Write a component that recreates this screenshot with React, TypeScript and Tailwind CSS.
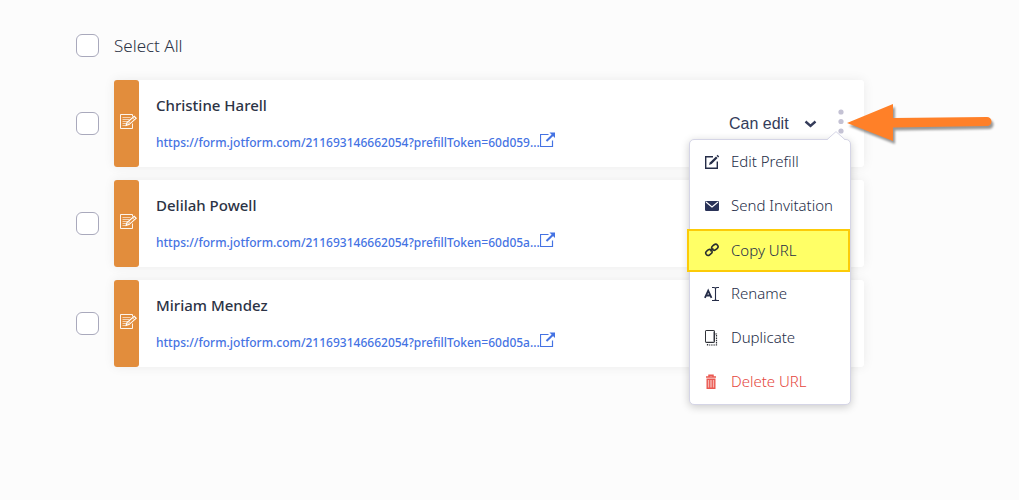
import type { ReactNode } from "react";
import clsx from "clsx";

const prefills = [
  { id: 1, name: "Christine Harell", url: "https://form.jotform.com/211693146662054?prefillToken=60d059...", menuOpen: true },
  { id: 2, name: "Delilah Powell", url: "https://form.jotform.com/211693146662054?prefillToken=60d05a...", menuOpen: false },
  { id: 3, name: "Miriam Mendez", url: "https://form.jotform.com/211693146662054?prefillToken=60d05a...", menuOpen: false },
];

function FormIcon() {
  return (
    <svg width="17" height="17" viewBox="0 0 17 17" fill="none" stroke="#fff" aria-hidden="true">
      <path d="M12.5 3.5V1.5h-12v14h12v-5" strokeOpacity="0.9" />
      <path d="M2.5 4.5h8M2.5 6.5h7M2.5 8.5h6M2.5 10.5h4M2.5 12.5h3" strokeOpacity="0.6" />
      <path d="M6 12.5l1-3 7.2-6.2 2 2L9 11.6z" fill="#e28d3c" strokeWidth="1.1" />
      <path d="M12.5 4.8l2 2M6 12.5l4-3.8" strokeWidth="0.8" />
    </svg>
  );
}

function OpenIcon() {
  return (
    <svg width="16" height="16" viewBox="0 0 16 16" fill="none" stroke="#4573e3" aria-hidden="true">
      <path d="M8.5 2.5h-8v12h12v-6" strokeWidth="1.2" />
      <path d="M6.5 9L13 2.8" strokeWidth="2" />
      <path d="M9.5.5H15V6z" fill="#4573e3" stroke="none" />
    </svg>
  );
}

function EditIcon() {
  return (
    <svg width="16" height="16" viewBox="0 0 16 16" fill="none" stroke="#252d48" aria-hidden="true">
      <path d="M9 2.7H1.7v11.6h11.6V7.5" strokeWidth="1.4" />
      <path d="M5 11l.8-2.6 6.2-6 1.6 1.6-6 6z" fill="#252d48" stroke="none" />
      <path d="M12.6 1.8l1-1 1.6 1.6-1 1z" fill="#252d48" stroke="none" />
    </svg>
  );
}

function MailIcon() {
  return (
    <svg width="16" height="16" viewBox="0 0 16 16" aria-hidden="true">
      <rect x="1" y="3" width="14" height="10" rx="1.2" fill="#2a3358" />
      <path d="M2 4l6 5 6-5" fill="none" stroke="#fff" strokeWidth="1.1" />
    </svg>
  );
}

function LinkIcon() {
  return (
    <svg width="16" height="16" viewBox="0 0 16 16" fill="none" stroke="#2a3030" strokeWidth="1.6" aria-hidden="true">
      <rect x="7.6" y="2.8" width="6.6" height="4.8" rx="2.4" transform="rotate(-38 10.9 5.2)" />
      <rect x="1.6" y="8" width="6.6" height="4.8" rx="2.4" transform="rotate(-38 4.9 10.4)" />
      <path d="M6.2 9.3l3.2-2.7" strokeWidth="1.3" />
    </svg>
  );
}

function RenameIcon() {
  return (
    <svg width="16" height="16" viewBox="0 0 16 16" fill="none" stroke="#252d48" aria-hidden="true">
      <path d="M.9 11.8L4.2 4.6 7.5 11.8M2.4 9.5h3.8" strokeWidth="1.8" />
      <path d="M8 1.5h2q1.5 0 1.5 1.2Q11.5 1.5 13 1.5h2M11.5 2.5v11M8 14.5h2q1.5 0 1.5-1.2 0 1.2 1.5 1.2h2" strokeWidth="1.1" />
    </svg>
  );
}

function DuplicateIcon() {
  return (
    <svg width="16" height="16" viewBox="0 0 16 16" fill="none" stroke="#303238" aria-hidden="true">
      <path d="M3.5 14v1h9V4H11" strokeWidth="1.2" strokeDasharray="1.5 0.8" />
      <path d="M9.5 1.5v10.5H2" stroke="#9a9ca3" />
      <rect x="1.5" y="0.5" width="9" height="12" rx="0.6" />
    </svg>
  );
}

function TrashIcon() {
  return (
    <svg width="16" height="16" viewBox="0 0 16 16" fill="none" stroke="#ea5850" aria-hidden="true">
      <path d="M2 3h10M5 2.4V1.2h4v1.2" strokeWidth="1.5" />
      <path d="M3.2 5.2h7.6v9H3.2z" fill="#f6b5b0" strokeWidth="1.4" />
      <path d="M5.7 5.5v8.4M8.3 5.5v8.4" strokeWidth="1.1" />
    </svg>
  );
}

function MenuItem({ icon, label, marked, danger }: { icon: ReactNode; label: string; marked?: boolean; danger?: boolean }) {
  return (
    <button
      type="button"
      role="menuitem"
      className={clsx(
        "flex items-center gap-[11px] text-left text-[15px] font-light whitespace-nowrap",
        marked ? "-ml-[3px] mt-px h-[43px] border-2 border-[#fccb08] bg-[#ffff66] pl-[15px]" : "h-[44px] pl-[14px]",
        danger ? "text-[#e5463d]" : "text-[#252d48]"
      )}
    >
      {icon}
      {label}
    </button>
  );
}

function ActionsMenu() {
  return (
    <div
      role="menu"
      className="absolute top-[30px] -right-1 z-10 flex w-[162px] flex-col rounded-[5px] border border-[#d5d5e6] bg-white shadow-[0_2px_8px_rgba(0,0,0,0.2)]"
    >
      <svg className="absolute -top-[9px] right-[5px]" width="18" height="10" viewBox="0 0 18 10" aria-hidden="true">
        <path d="M0 10V9L9 .5 18 9v1z" fill="#fff" />
        <path d="M0 8.7L9 .6l9 8.1" fill="none" stroke="#d5d5e6" />
      </svg>
      <MenuItem icon={<EditIcon />} label="Edit Prefill" />
      <MenuItem icon={<MailIcon />} label="Send Invitation" />
      <MenuItem icon={<LinkIcon />} label="Copy URL" marked />
      <MenuItem icon={<RenameIcon />} label="Rename" />
      <MenuItem icon={<DuplicateIcon />} label="Duplicate" />
      <MenuItem icon={<TrashIcon />} label="Delete URL" danger />
    </div>
  );
}

function PointerArrow() {
  return (
    <svg
      className="absolute -top-2 left-3 z-20 drop-shadow-[2px_3px_1px_rgba(0,0,0,0.4)]"
      width="150"
      height="44"
      viewBox="0 0 150 44"
      aria-hidden="true"
    >
      <path d="M0 22L46 3v14l94-1a4.5 4.5 0 0 1 0 9L46 26.5V40z" fill="#ff8028" />
    </svg>
  );
}

function RowActions() {
  return (
    <div className="flex items-center pr-[17px]">
      <div className="relative mr-[18px]">
        <select
          aria-label="Permission"
          className="w-[88px] appearance-none bg-transparent font-['Liberation_Sans',Arial,sans-serif] text-base text-[#343c5a]"
          defaultValue="edit"
        >
          <option value="edit">Can edit</option>
          <option value="view">Can view</option>
        </select>
        <svg className="pointer-events-none absolute top-[9px] right-0" width="13" height="8" viewBox="0 0 13 8" fill="none" aria-hidden="true">
          <path d="M1.5 1.5l5 4.3 5-4.3" stroke="#343c5a" strokeWidth="2.4" />
        </svg>
      </div>
      <div className="relative pb-1">
        <button type="button" aria-label="More actions" aria-haspopup="menu" className="block w-3">
          <svg width="12" height="26" viewBox="0 0 12 26" fill="#c4c2d4" aria-hidden="true">
            <circle cx="6" cy="3" r="2.6" />
            <circle cx="6" cy="12.5" r="2.6" />
            <circle cx="6" cy="22" r="2.6" />
          </svg>
        </button>
        <ActionsMenu />
        <PointerArrow />
      </div>
    </div>
  );
}

const checkbox = "size-[23px] shrink-0 appearance-none rounded-[6px] border border-[#a9a9bc] bg-white checked:bg-[#4573e3]";

export default function App() {
  return (
    <main className="min-h-screen bg-[#fcfcfc] pt-[34px] pr-[155px] pb-8 pl-[76px] font-['Noto_Sans','Open_Sans',sans-serif] text-[#2c3345]">
      <label className="flex h-[23px] w-fit items-center gap-[15px] text-[17px] font-light">
        <input type="checkbox" className={checkbox} />
        Select All
      </label>

      <ul className="mt-[23px] flex flex-col gap-[13px]">
        {prefills.map((prefill) => (
          <li key={prefill.id} className="flex items-center gap-[15px]">
            <input type="checkbox" aria-label={prefill.name} className={checkbox} />
            <article className="flex h-[87px] min-w-0 flex-1 rounded-[3px] bg-white shadow-[0_0_12px_rgba(0,0,0,0.07)]">
              <div className="flex w-[25px] shrink-0 items-center justify-center rounded-[3px] bg-[#e28d3c] pb-1 pl-1">
                <FormIcon />
              </div>
              <div className="flex min-w-0 flex-1 flex-col gap-[17px] pt-[15px] pl-[17px]">
                <h2 className="text-[15px] leading-5 font-medium">{prefill.name}</h2>
                <a href="#prefill" className="flex w-fit items-start text-[12px] leading-[22px] font-medium whitespace-nowrap text-[#4573e3]">
                  {prefill.url}
                  <OpenIcon />
                </a>
              </div>
              {prefill.menuOpen && <RowActions />}
            </article>
          </li>
        ))}
      </ul>
    </main>
  );
}
